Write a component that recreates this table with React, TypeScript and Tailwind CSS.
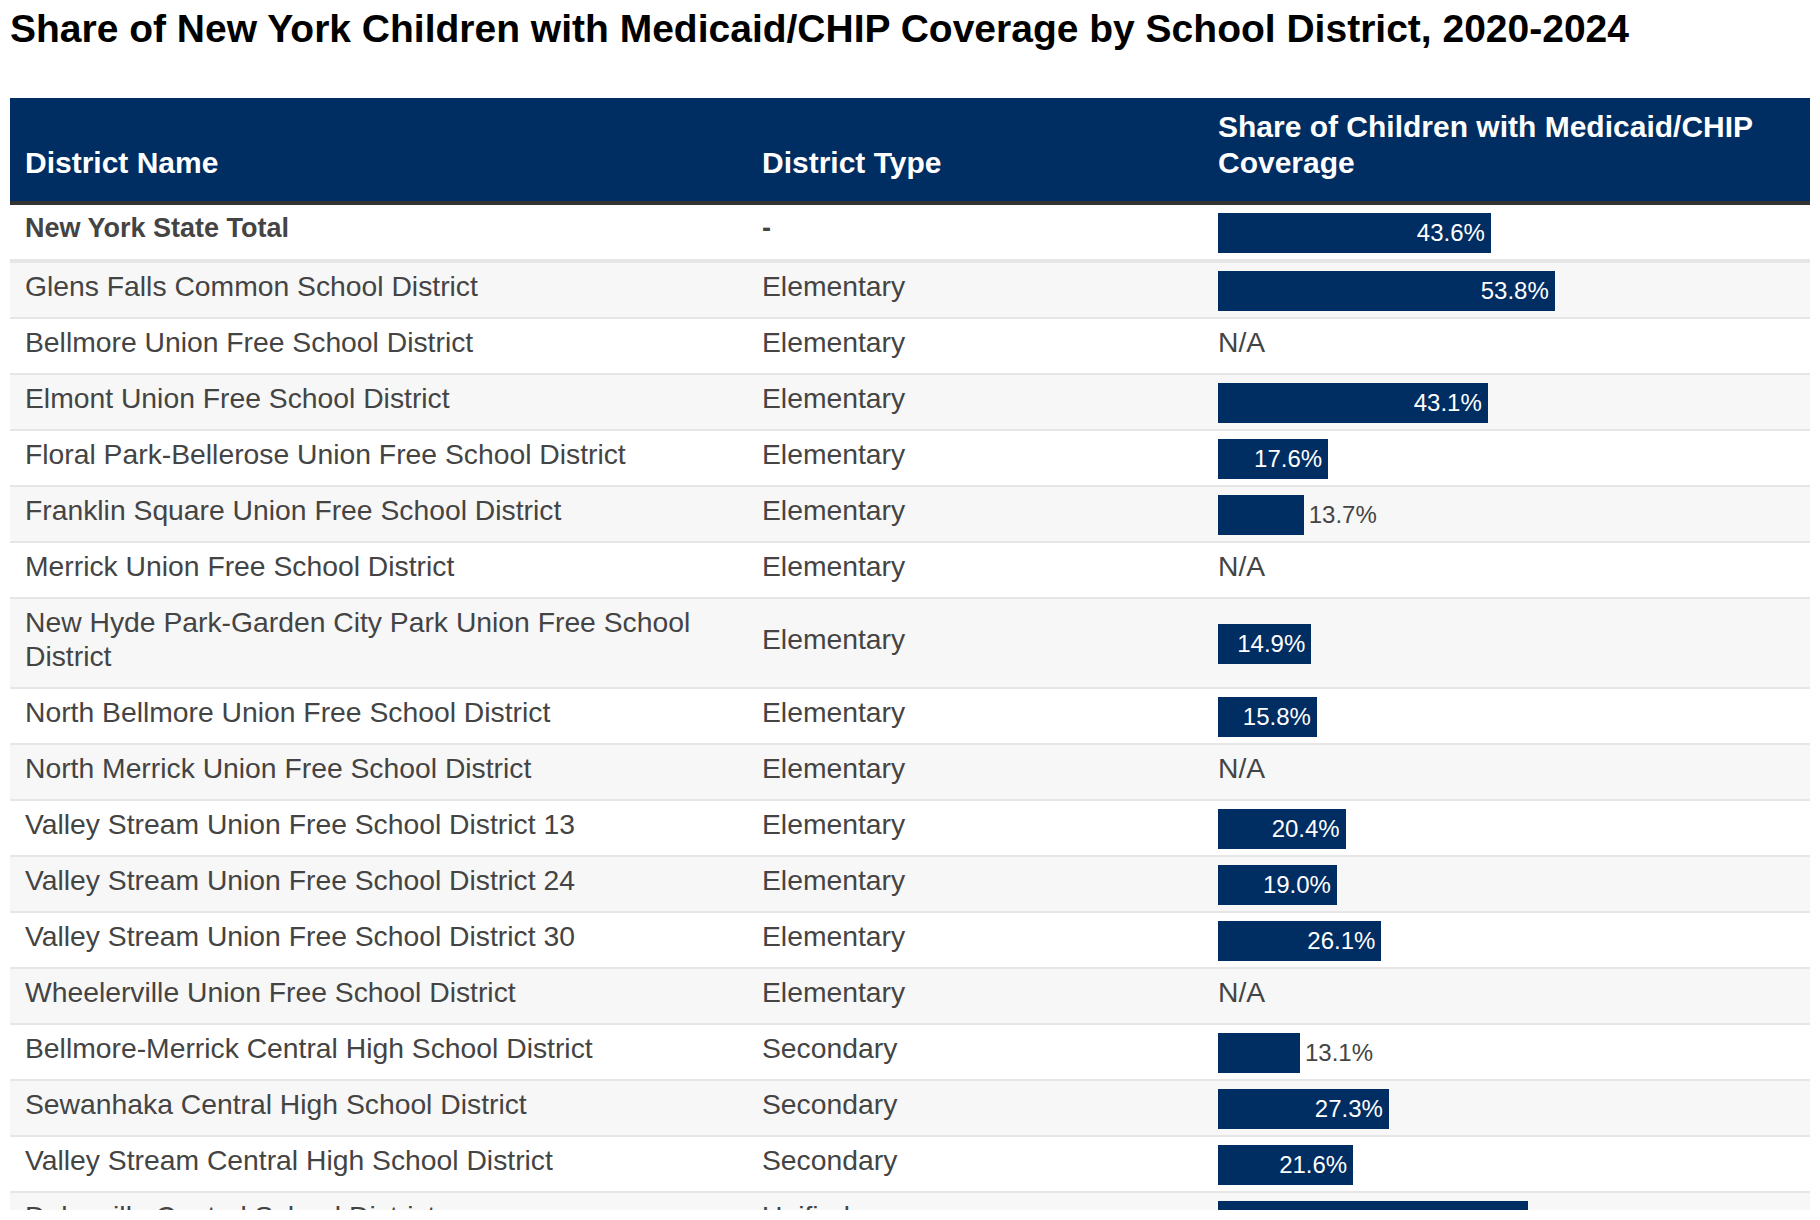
type Row = {
  name: string
  type: string
  value: number | null
  total?: boolean
}

const rows: Row[] = [
  { name: 'New York State Total', type: '-', value: 43.6, total: true },
  { name: 'Glens Falls Common School District', type: 'Elementary', value: 53.8 },
  { name: 'Bellmore Union Free School District', type: 'Elementary', value: null },
  { name: 'Elmont Union Free School District', type: 'Elementary', value: 43.1 },
  { name: 'Floral Park-Bellerose Union Free School District', type: 'Elementary', value: 17.6 },
  { name: 'Franklin Square Union Free School District', type: 'Elementary', value: 13.7 },
  { name: 'Merrick Union Free School District', type: 'Elementary', value: null },
  { name: 'New Hyde Park-Garden City Park Union Free School District', type: 'Elementary', value: 14.9 },
  { name: 'North Bellmore Union Free School District', type: 'Elementary', value: 15.8 },
  { name: 'North Merrick Union Free School District', type: 'Elementary', value: null },
  { name: 'Valley Stream Union Free School District 13', type: 'Elementary', value: 20.4 },
  { name: 'Valley Stream Union Free School District 24', type: 'Elementary', value: 19.0 },
  { name: 'Valley Stream Union Free School District 30', type: 'Elementary', value: 26.1 },
  { name: 'Wheelerville Union Free School District', type: 'Elementary', value: null },
  { name: 'Bellmore-Merrick Central High School District', type: 'Secondary', value: 13.1 },
  { name: 'Sewanhaka Central High School District', type: 'Secondary', value: 27.3 },
  { name: 'Valley Stream Central High School District', type: 'Secondary', value: 21.6 },
  { name: 'Dolgeville Central School District', type: 'Unified', value: 49.5 }
]

// bar length in px per percentage point
const SCALE = 6.26

function cx(...classes: Array<string | false | null | undefined>) {
  return classes.filter(Boolean).join(' ')
}

function CoverageBar({ value }: { value: number }) {
  const inside = value >= 14
  const label = `${value.toFixed(1)}%`
  return (
    <div className="flex h-[40px] items-center">
      <div
        className="flex h-full items-center justify-end bg-[#002d62] pr-[6px]"
        style={{ width: `${value * SCALE}px` }}
      >
        {inside && <span className="text-[24px] leading-none text-white">{label}</span>}
      </div>
      {!inside && <span className="ml-[5px] text-[24px] leading-none text-[#444]">{label}</span>}
    </div>
  )
}

export default function App() {
  return (
    <div className="h-[1210px] overflow-hidden bg-white px-[10px] pt-[5px] font-['Liberation_Sans',Arial,sans-serif] text-[#444]">
      <h1 className="text-[39px] font-bold leading-[48px] text-black">
        Share of New York Children with Medicaid/CHIP Coverage by School District, 2020-2024
      </h1>

      <table className="mt-[45px] w-full table-fixed border-collapse">
        <colgroup>
          <col className="w-[737px]" />
          <col className="w-[456px]" />
          <col />
        </colgroup>
        <thead>
          <tr className="bg-[#002d62] text-left align-bottom text-[30px] font-bold leading-[36px] text-white">
            <th className="border-b-4 border-[#333] pb-[20px] pl-[15px] pr-[15px] pt-[11px] font-bold">District Name</th>
            <th className="border-b-4 border-[#333] pb-[20px] pl-[15px] pr-[15px] pt-[11px] font-bold">District Type</th>
            <th className="border-b-4 border-[#333] pb-[20px] pl-[15px] pr-[15px] pt-[11px] font-bold">
              Share of Children with Medicaid/CHIP Coverage
            </th>
          </tr>
        </thead>
        <tbody>
          {rows.map((row, i) => {
            const border = row.total ? 'border-b-4 border-[#e6e6e6]' : 'border-b-2 border-[#e6e6e6]'
            return (
              <tr key={row.name} className={cx('align-middle leading-[34px]', i % 2 === 1 ? 'bg-[#f7f7f7]' : 'bg-white')}>
                <td
                  className={cx(
                    'pb-[14px] pl-[15px] pr-[15px] pt-[6px]',
                    row.total ? 'text-[27px] font-bold' : 'text-[28.3px]',
                    border
                  )}
                >
                  {row.name}
                </td>
                <td
                  className={cx(
                    'pb-[14px] pl-[15px] pr-[15px] pt-[6px]',
                    row.total ? 'text-[27px] font-bold' : 'text-[28.3px]',
                    border
                  )}
                >
                  {row.type}
                </td>
                {row.value === null ? (
                  <td className={cx('pb-[14px] pl-[15px] pr-[15px] pt-[6px] text-[28.3px]', border)}>N/A</td>
                ) : (
                  <td className={cx('pb-[6px] pl-[15px] pr-[15px] pt-[8px]', border)}>
                    <CoverageBar value={row.value} />
                  </td>
                )}
              </tr>
            )
          })}
        </tbody>
      </table>
    </div>
  )
}
